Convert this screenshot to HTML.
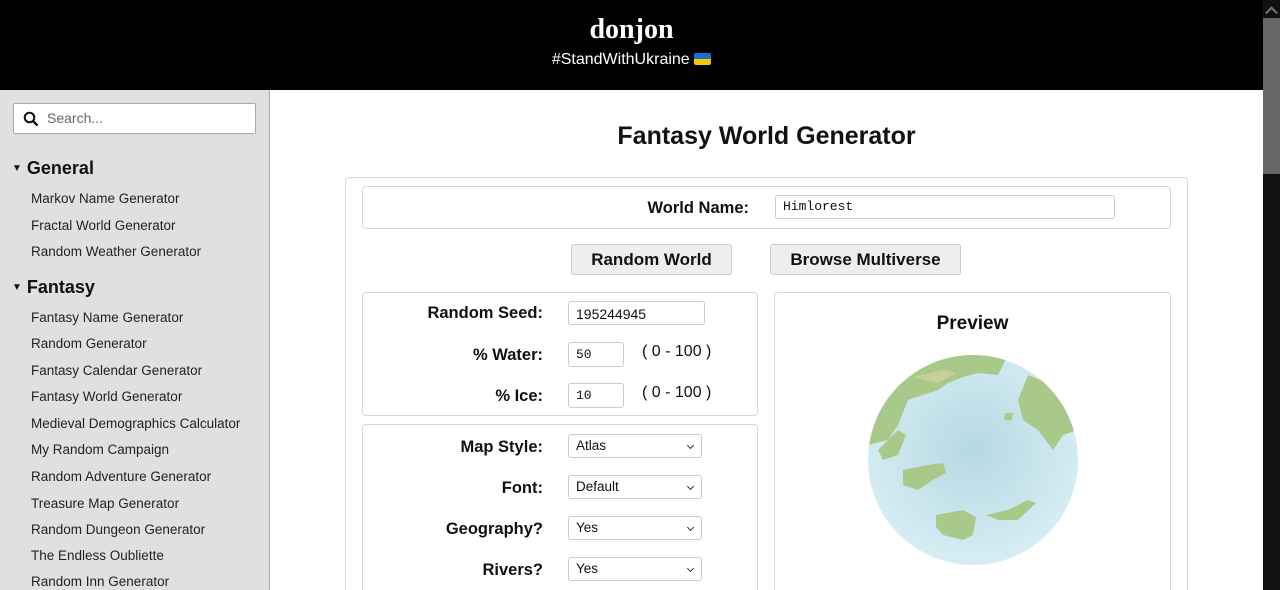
<!DOCTYPE html>
<html style="width:1280px;height:590px;overflow:hidden"><head><meta charset="utf-8"><style>
*{box-sizing:border-box;margin:0;padding:0}
body{width:1280px;height:590px;overflow:hidden;position:relative;background:#fff;font-family:"Liberation Sans",sans-serif;color:#111}
.a{position:absolute}
#hdr{left:0;top:0;width:1263px;height:90px;background:#000;color:#fff;text-align:center}
#sb{left:1263px;top:0;width:17px;height:590px;background:#111}
#thumb{left:1263px;top:18px;width:17px;height:156px;background:#676767}
#side{left:0;top:90px;width:270px;height:500px;background:#e0e0e0;border-right:1px solid #aaa;overflow:hidden}
.it{position:absolute;left:31px;font-size:13.5px;color:#222;line-height:16px}
.hd{position:absolute;left:12px;font-size:18px;font-weight:bold}
.box{position:absolute;border:1px solid #d8d8d8;border-radius:4px;background:#fff}
.open{border-bottom:none;border-radius:4px 4px 0 0}
.lbl{position:absolute;right:737px;font-size:16.5px;font-weight:bold;text-align:right;white-space:nowrap}
.inp{position:absolute;border:1px solid #ccc;border-radius:3px;background:#fff;font-family:"Liberation Mono",monospace;font-size:13px;padding:4px 7px}
.sel{position:absolute;left:568px;width:134px;height:24px;border:1px solid #ccc;border-radius:3px;font-size:13.5px;padding:3px 7px;background:#fff}
.sel:after{content:"";position:absolute;right:8px;top:8px;width:4px;height:4px;border-right:1.5px solid #333;border-bottom:1.5px solid #333;transform:rotate(45deg)}
.btn{position:absolute;top:244px;height:31px;background:#eee;border:1px solid #ccc;border-radius:3px;font-size:17px;font-weight:bold;text-align:center;line-height:29px}
.rng{position:absolute;left:642px;font-size:16px}
#wrap{position:absolute;left:0;top:0;width:1280px;height:590px;overflow:hidden}
</style></head><body><div id="wrap">
<div id="hdr" class="a">
<div style="position:absolute;left:0;right:0;top:14px;font-family:'Liberation Serif',serif;font-size:28px;font-weight:bold">donjon</div>
<div style="position:absolute;left:0;right:0;top:51px;font-size:16px">#StandWithUkraine <span style="display:inline-block;width:17px;height:12px;vertical-align:-1px;border-radius:2px;background:linear-gradient(#1a6fd0 50%,#f5c800 50%)"></span></div>
</div>
<div id="sb" class="a"></div><div id="thumb" class="a"></div>
<div class="a" style="left:1267px;top:4px;width:9px;height:9px;border-left:2px solid #777;border-top:2px solid #777;transform:rotate(45deg) translate(3px,3px)"></div>
<div id="side" class="a">
<div class="a" style="left:13px;top:13px;width:243px;height:31px;background:#fff;border:1px solid #aaa;border-radius:2px">
<svg class="a" style="left:9px;top:7px" width="16" height="16" viewBox="0 0 16 16"><circle cx="6.5" cy="6.5" r="4.8" fill="none" stroke="#111" stroke-width="2"/><path d="M10 10L14.5 14.5" stroke="#111" stroke-width="2.4"/></svg>
<span class="a" style="left:33px;top:6px;font-size:14px;color:#666">Search...</span></div>
<div class="hd" style="top:68px"><span style="font-size:10px;vertical-align:3px">▼</span> General</div>
<div class="it" style="top:101px">Markov Name Generator</div>
<div class="it" style="top:128px">Fractal World Generator</div>
<div class="it" style="top:154px">Random Weather Generator</div>
<div class="hd" style="top:187px"><span style="font-size:10px;vertical-align:3px">▼</span> Fantasy</div>
<div class="it" style="top:220px">Fantasy Name Generator</div>
<div class="it" style="top:246px">Random Generator</div>
<div class="it" style="top:273px">Fantasy Calendar Generator</div>
<div class="it" style="top:299px">Fantasy World Generator</div>
<div class="it" style="top:326px">Medieval Demographics Calculator</div>
<div class="it" style="top:352px">My Random Campaign</div>
<div class="it" style="top:379px">Random Adventure Generator</div>
<div class="it" style="top:406px">Treasure Map Generator</div>
<div class="it" style="top:432px">Random Dungeon Generator</div>
<div class="it" style="top:458px">The Endless Oubliette</div>
<div class="it" style="top:484px">Random Inn Generator</div>
</div>
<div class="a" style="left:270px;width:993px;top:122px;text-align:center;font-size:25px;font-weight:bold">Fantasy World Generator</div>
<div class="box open" style="left:345px;top:177px;width:843px;height:413px"></div>
<div class="box" style="left:362px;top:186px;width:809px;height:43px"></div>
<div class="lbl" style="right:531px;top:199px">World Name:</div>
<div class="inp" style="left:775px;top:195px;width:340px;height:24px;padding-top:3px">Himlorest</div>
<div class="btn" style="left:571px;width:161px">Random World</div>
<div class="btn" style="left:770px;width:191px">Browse Multiverse</div>
<div class="box" style="left:362px;top:292px;width:396px;height:124px"></div>
<div class="box open" style="left:362px;top:424px;width:396px;height:166px"></div>
<div class="box open" style="left:774px;top:292px;width:397px;height:298px"></div>
<div class="lbl" style="top:304px">Random Seed:</div>
<div class="inp" style="left:568px;top:301px;width:137px;height:24px;padding-top:4px;font-family:'Liberation Sans',sans-serif;font-size:14px">195244945</div>
<div class="lbl" style="top:346px">% Water:</div>
<div class="inp" style="left:568px;top:342px;width:56px;height:25px">50</div>
<div class="rng" style="top:343px">( 0 - 100 )</div>
<div class="lbl" style="top:387px">% Ice:</div>
<div class="inp" style="left:568px;top:383px;width:56px;height:25px">10</div>
<div class="rng" style="top:384px">( 0 - 100 )</div>
<div class="lbl" style="top:438px">Map Style:</div><div class="sel" style="top:434px">Atlas</div>
<div class="lbl" style="top:479px">Font:</div><div class="sel" style="top:475px">Default</div>
<div class="lbl" style="top:520px">Geography?</div><div class="sel" style="top:516px">Yes</div>
<div class="lbl" style="top:561px">Rivers?</div><div class="sel" style="top:557px">Yes</div>
<div class="a" style="left:774px;width:397px;top:313px;text-align:center;font-size:19px;font-weight:bold">Preview</div>
<svg class="a" style="left:868px;top:355px" width="210" height="210" viewBox="0 0 210 210">
<defs><radialGradient id="g" cx="50%" cy="45%" r="55%"><stop offset="0" stop-color="#b6d8e3"/><stop offset="1" stop-color="#d6edf3"/></radialGradient>
<clipPath id="c"><circle cx="105" cy="105" r="105"/></clipPath></defs>
<circle cx="105" cy="105" r="105" fill="url(#g)"/>
<g clip-path="url(#c)" fill="#a9c98a">
<path d="M60 0 L140 0 L130 20 L110 18 L95 22 L80 28 L70 35 L55 40 L40 45 L30 70 L20 85 L0 90 L0 20 Z"/>
<path d="M160 20 L210 40 L210 75 L195 80 L185 95 L170 75 L155 65 L150 45 Z"/>
<path d="M10 95 L30 75 L38 80 L30 100 L15 105 Z"/>
<path d="M35 115 L60 110 L75 108 L78 118 L65 125 L50 135 L35 130 Z"/>
<path d="M68 160 L95 155 L108 162 L105 180 L95 185 L75 180 L68 172 Z"/>
<path d="M118 160 L140 155 L160 145 L168 148 L150 165 L130 165 Z"/>
<path d="M45 22 L75 15 L88 18 L70 28 Z" fill="#c9cf98"/>
<path d="M137 58 L145 58 L143 66 L136 64 Z"/>
</g></svg>
</div></body></html>
